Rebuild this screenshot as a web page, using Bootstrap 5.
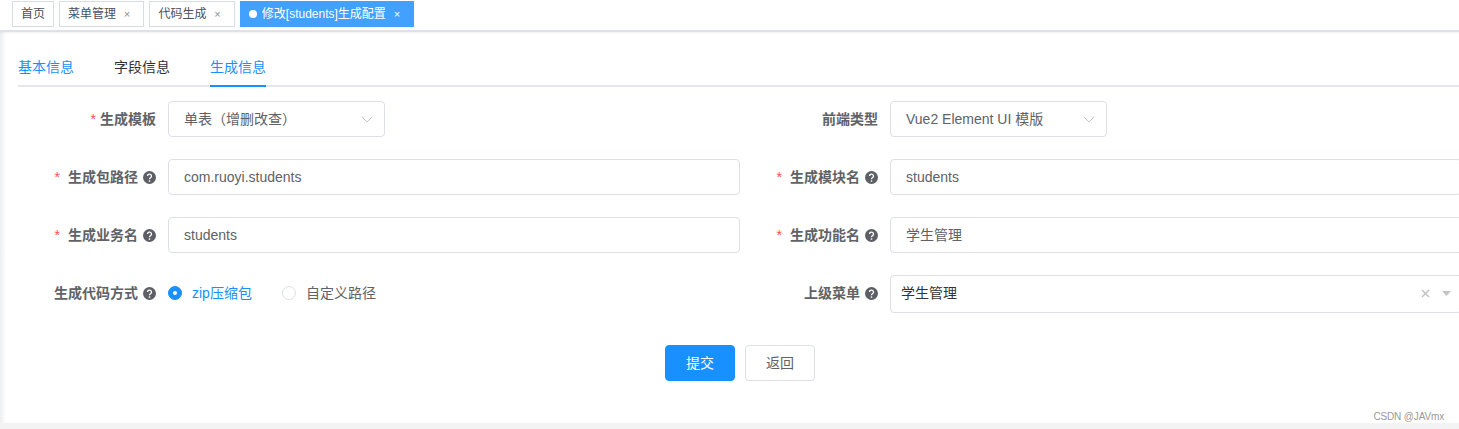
<!DOCTYPE html>
<html lang="zh">
<head>
<meta charset="utf-8">
<title>修改[students]生成配置</title>
<link href="https://cdn.jsdelivr.net/npm/bootstrap@5.3.0/dist/css/bootstrap.min.css" rel="stylesheet">
<style>
html,body{height:429px;overflow:hidden;background:#fff}
body{font-family:"Liberation Sans","Noto Sans CJK SC",sans-serif;font-size:14px;color:#606266;width:1459px;position:relative}
.shell{height:423px;display:flex;flex-direction:column;border-bottom:0;background:linear-gradient(90deg,#eceef1 0,#fff 6px)}
.tagbar{height:32px;flex:none;display:flex;gap:5px;padding:1px 0 0 12px;border-bottom:2px solid #dfe1ea;box-shadow:0 1px 2px rgba(0,21,41,.06);background:#fff}
.tagitem{height:26px;line-height:24px;border:1px solid #d8dce5;background:#fff;color:#495060;font-size:12px;padding:0 8px;display:flex;align-items:center;white-space:nowrap}
.tagitem .shut{font-size:11px;color:#8b8f98;margin:0 2.4px 0 5px;width:12px;text-align:center;line-height:1}
.tagitem.on{background:#42a0ff;border-color:#42a0ff;color:#fff;padding:0 8px}
.tagitem.on .shut{color:#fff}
.tagitem.on::before{content:"";width:8px;height:8px;border-radius:50%;background:#fff;margin-right:5px}
.tabstrip{margin:19px 0 14px 18px;height:36px;gap:40px;border-bottom:2px solid #e4e7ed;width:1441px;flex-wrap:nowrap}
.tabstrip .nav-link{padding:0;height:36px;line-height:33px;color:#303133;font-size:14px;border-bottom:2px solid transparent;border-radius:0;background:none}
.tabstrip .nav-link.blue{color:#1890ff}
.tabstrip .nav-link.active{color:#1890ff;border-bottom-color:#1890ff}
.formwrap{margin-left:18px;width:1444px}
.frow{display:flex;margin-bottom:22px}
.fcell{width:722px;display:flex;align-items:center;flex:none}
.flabel{width:150px;flex:none;padding-right:12px;display:flex;justify-content:flex-end;align-items:center;font-weight:700;font-size:14px;color:#606266;white-space:nowrap}
.flabel .req{color:#ff4d4f;font-weight:400;margin-right:4px}
.flabel .req.wide{margin-right:8px}
.flabel svg{margin-left:5px;flex:none}
.ginput.form-control{width:572px;height:36px;border:1px solid #dcdfe6;border-radius:4px;padding:0 15px;font-size:14px;color:#606266;box-shadow:none}
.ginput.form-control.cjkval{padding-bottom:2px}
.gselect{width:217px;height:36px;border:1px solid #dcdfe6;border-radius:4px;padding:0 15px;display:flex;align-items:center;justify-content:space-between;color:#606266;background:#fff}
.gselect svg{margin-right:-4px}
.frow.lastrow .flabel{margin-bottom:2px}
.radios{display:flex;align-items:center;margin-bottom:2px}
.rad{display:flex;align-items:center;gap:10px;margin-right:30px;white-space:nowrap;line-height:20px}
.dot{width:14px;height:14px;border-radius:50%;border:1px solid #dcdfe6;background:#fff;display:inline-block}
.rad.sel{color:#1890ff}
.rad.sel .dot{background:#1890ff;border-color:#1890ff;position:relative}
.rad.sel .dot::after{content:"";position:absolute;width:4px;height:4px;border-radius:50%;background:#fff;left:4px;top:4px}
.treesel{width:572px;height:38px;border:1px solid #dcdfe6;border-radius:4px;display:flex;align-items:center;padding:0 10px 2px;color:#333;font-size:14px;position:relative}
.treeicons{position:absolute;left:530px;top:13px;display:flex;gap:12px;align-items:center}
.actions{display:flex;justify-content:center;gap:10px;margin-top:32px;margin-left:-18px;width:1480px}
.actions .btn{width:70px;height:36px;padding:0;font-size:14px;border-radius:4px}
.btn-go{background:#1890ff;border:1px solid #1890ff;color:#fff}
.btn-back{background:#fff;border:1px solid #dcdfe6;color:#606266}
.footband{height:6px;background:#f3f3f4}
.stamp{position:absolute;right:15px;top:411px;font-size:10px;letter-spacing:-.15px;color:#999;line-height:12px}
</style>
</head>
<body>
<div class="shell">
  <div class="tagbar">
    <div class="tagitem">首页</div>
    <div class="tagitem">菜单管理<span class="shut">×</span></div>
    <div class="tagitem">代码生成<span class="shut">×</span></div>
    <div class="tagitem on">修改[students]生成配置<span class="shut">×</span></div>
  </div>
  <ul class="nav tabstrip">
    <li class="nav-item"><a class="nav-link blue" href="#">基本信息</a></li>
    <li class="nav-item"><a class="nav-link" href="#">字段信息</a></li>
    <li class="nav-item"><a class="nav-link active" href="#">生成信息</a></li>
  </ul>
  <form class="formwrap">
    <div class="frow">
      <div class="fcell">
        <label class="flabel"><span class="req">*</span>生成模板</label>
        <div class="gselect"><span>单表（增删改查）</span><svg width="12" height="7" viewBox="0 0 12 7"><path d="M1 1l5 5 5-5" fill="none" stroke="#c0c4cc" stroke-width="1"/></svg></div>
      </div>
      <div class="fcell">
        <label class="flabel">前端类型</label>
        <div class="gselect"><span>Vue2 Element UI 模版</span><svg width="12" height="7" viewBox="0 0 12 7"><path d="M1 1l5 5 5-5" fill="none" stroke="#c0c4cc" stroke-width="1"/></svg></div>
      </div>
    </div>
    <div class="frow">
      <div class="fcell">
        <label class="flabel"><span class="req wide">*</span>生成包路径<svg width="13" height="13" viewBox="0 0 13 13"><circle cx="6.5" cy="6.5" r="6.5" fill="#5c5f66"/><path d="M4.5 5.1a2 2 0 1 1 3 1.7c-.7.4-1 .7-1 1.4" fill="none" stroke="#fff" stroke-width="1.3"/><circle cx="6.5" cy="10" r=".85" fill="#fff"/></svg></label>
        <input class="form-control ginput" value="com.ruoyi.students">
      </div>
      <div class="fcell">
        <label class="flabel"><span class="req wide">*</span>生成模块名<svg width="13" height="13" viewBox="0 0 13 13"><circle cx="6.5" cy="6.5" r="6.5" fill="#5c5f66"/><path d="M4.5 5.1a2 2 0 1 1 3 1.7c-.7.4-1 .7-1 1.4" fill="none" stroke="#fff" stroke-width="1.3"/><circle cx="6.5" cy="10" r=".85" fill="#fff"/></svg></label>
        <input class="form-control ginput" value="students">
      </div>
    </div>
    <div class="frow">
      <div class="fcell">
        <label class="flabel"><span class="req wide">*</span>生成业务名<svg width="13" height="13" viewBox="0 0 13 13"><circle cx="6.5" cy="6.5" r="6.5" fill="#5c5f66"/><path d="M4.5 5.1a2 2 0 1 1 3 1.7c-.7.4-1 .7-1 1.4" fill="none" stroke="#fff" stroke-width="1.3"/><circle cx="6.5" cy="10" r=".85" fill="#fff"/></svg></label>
        <input class="form-control ginput" value="students">
      </div>
      <div class="fcell">
        <label class="flabel"><span class="req wide">*</span>生成功能名<svg width="13" height="13" viewBox="0 0 13 13"><circle cx="6.5" cy="6.5" r="6.5" fill="#5c5f66"/><path d="M4.5 5.1a2 2 0 1 1 3 1.7c-.7.4-1 .7-1 1.4" fill="none" stroke="#fff" stroke-width="1.3"/><circle cx="6.5" cy="10" r=".85" fill="#fff"/></svg></label>
        <input class="form-control ginput cjkval" value="学生管理">
      </div>
    </div>
    <div class="frow lastrow mb-0">
      <div class="fcell">
        <label class="flabel">生成代码方式<svg width="13" height="13" viewBox="0 0 13 13"><circle cx="6.5" cy="6.5" r="6.5" fill="#5c5f66"/><path d="M4.5 5.1a2 2 0 1 1 3 1.7c-.7.4-1 .7-1 1.4" fill="none" stroke="#fff" stroke-width="1.3"/><circle cx="6.5" cy="10" r=".85" fill="#fff"/></svg></label>
        <div class="radios">
          <span class="rad sel"><span class="dot"></span>zip压缩包</span>
          <span class="rad"><span class="dot"></span>自定义路径</span>
        </div>
      </div>
      <div class="fcell">
        <label class="flabel">上级菜单<svg width="13" height="13" viewBox="0 0 13 13"><circle cx="6.5" cy="6.5" r="6.5" fill="#5c5f66"/><path d="M4.5 5.1a2 2 0 1 1 3 1.7c-.7.4-1 .7-1 1.4" fill="none" stroke="#fff" stroke-width="1.3"/><circle cx="6.5" cy="10" r=".85" fill="#fff"/></svg></label>
        <div class="treesel">学生管理
          <span class="treeicons"><svg width="9" height="9" viewBox="0 0 9 9"><path d="M1 1l7 7M8 1l-7 7" stroke="#c4c4c4" stroke-width="1.6"/></svg><svg width="9" height="5" viewBox="0 0 9 5"><path d="M0 0h9L4.5 5z" fill="#c4c4c4"/></svg></span>
        </div>
      </div>
    </div>
    <div class="actions">
      <button type="button" class="btn btn-go">提交</button>
      <button type="button" class="btn btn-back">返回</button>
    </div>
  </form>
</div>
<div class="footband"></div>
<div class="stamp">CSDN @JAVmx</div>
</body>
</html>
